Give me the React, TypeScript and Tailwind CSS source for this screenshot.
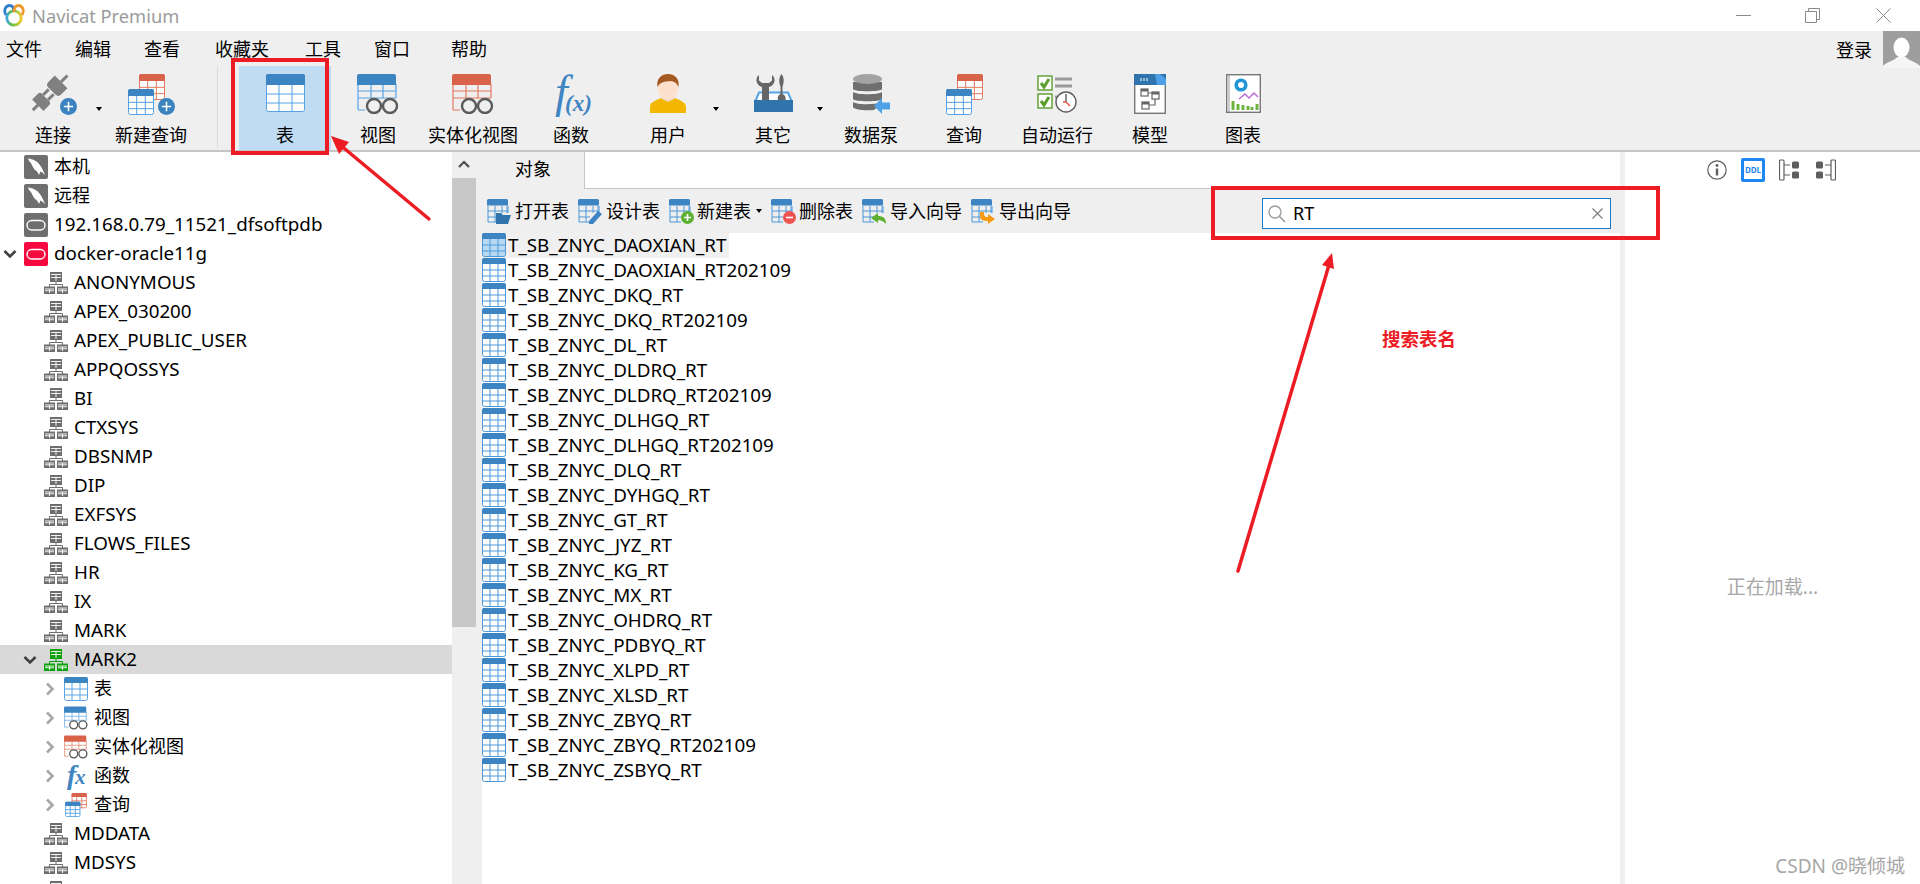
import React from "react";

const FONT = '"Noto Sans","Noto Sans CJK SC",sans-serif';

function Table({ w, h, head = "#3d84c2", line = "#55a2e4", fill = "#ffffff", headH, cols = 3, rows = 3, x = 0, y = 0, sw = 1, selected = false }: any) {
  const hh = headH ?? Math.round(h * 0.28);
  const r = 2;
  const v = Array.from({ length: cols - 1 }, (_, i) => x + ((i + 1) * w) / cols);
  const hs = Array.from({ length: rows - 1 }, (_, i) => y + hh + ((i + 1) * (h - hh)) / rows);
  return (
    <g>
      <rect x={x + sw / 2} y={y + sw / 2} width={w - sw} height={h - sw} rx={r} fill={selected ? "#b9d8f3" : fill} stroke={line} strokeWidth={sw} />
      {v.map((a, i) => <line key={i} x1={a} x2={a} y1={y + hh} y2={y + h} stroke={line} strokeWidth={sw} />)}
      {hs.map((a, i) => <line key={i} x1={x} x2={x + w} y1={a} y2={a} stroke={line} strokeWidth={sw} />)}
      <path d={`M${x} ${y + hh}V${y + r}a${r} ${r} 0 0 1 ${r} -${r}H${x + w - r}a${r} ${r} 0 0 1 ${r} ${r}V${y + hh}z`} fill={head} />
    </g>
  );
}

const Plus = ({ cx, cy, r, fill = "#3b82c0" }: any) => (
  <g>
    <circle cx={cx} cy={cy} r={r} fill={fill} />
    <path d={`M${cx - r * 0.55} ${cy}H${cx + r * 0.55}M${cx} ${cy - r * 0.55}V${cy + r * 0.55}`} stroke="#fff" strokeWidth={1.6} />
  </g>
);

const Plug = () => (
  <svg width="47" height="41" viewBox="0 0 47 41">
    <g transform="translate(20.500 18.500) rotate(-45)" fill="#808080">
      <rect x="-25" y="-1.500" width="9" height="3" />
      <path d="M-18 -8H-10a3 3 0 0 1 3 3V5a3 3 0 0 1 -3 3H-18z" />
      <rect x="-7" y="-5" width="8" height="3" />
      <rect x="-7" y="2" width="8" height="3" />
      <path d="M15 -9H6a4 4 0 0 0 -4 4V5a4 4 0 0 0 4 4H15z" />
      <rect x="15" y="-1.500" width="9" height="3" />
    </g>
    <Plus cx={38.5} cy={32.5} r={8.5} />
  </svg>
);

const NewQuery = () => (
  <svg width="47" height="41" viewBox="0 0 47 41">
    <Table x={11} y={0} w={26} h={26} head="#d9634a" line="#e27a5f" headH={7} />
    <Table x={0} y={15} w={26} h={26} headH={7} />
    <Plus cx={38.5} cy={32.5} r={8.5} />
  </svg>
);

const BigTable = () => (
  <svg width="39" height="38" viewBox="0 0 39 38"><Table w={39} h={38} headH={11} /></svg>
);

const Glasses = ({ bg, s = 1 }: any) => (
  <g stroke="#5b5b5b" strokeWidth={2.4 * s} fill={bg}>
    <circle cx={17 * s} cy={32 * s} r={7 * s} />
    <circle cx={33 * s} cy={32 * s} r={7 * s} />
  </g>
);

const ViewIcon = ({ head = "#3d84c2", line = "#55a2e4", bg = "#efefef", w = 42, h = 40 }: any) => (
  <svg width={w} height={h} viewBox="0 0 42 40">
    <path d="M1 36V10M1 36H8M14 10V24M26 10V24M39 10V24M1 17H39M1 24H39" stroke={line} strokeWidth="1.2" fill="none" />
    <path d="M0 11V2a2 2 0 0 1 2 -2H37a2 2 0 0 1 2 2V11z" fill={head} />
    <Glasses bg={bg} />
  </svg>
);

const FuncIcon = () => (
  <svg width="48" height="54" viewBox="0 0 48 54" className="-mt-[9px] -ml-[4px]">
    <text x="10" y="42" fontFamily='"Liberation Serif",serif' fontStyle="italic" fontSize="46" fill="#3f85c1">f</text>
    <text x="20" y="46" fontFamily='"Liberation Serif",serif' fontStyle="italic" fontWeight="bold" fontSize="23" fill="#3f85c1">(x)</text>
  </svg>
);

const UserIcon = () => (
  <svg width="36" height="39" viewBox="0 0 36 39">
    <path d="M0 39V33C0 28 6 26 12 24L18 27L24 24C30 26 36 28 36 33V39z" fill="#f4b700" />
    <path d="M12 20h12v5l-6 3l-6 -3z" fill="#f1d2bc" />
    <ellipse cx="18" cy="13" rx="10.500" ry="13" fill="#fde1ce" />
    <path d="M7.500 13C6 4 12 0 18 0C24 0 30 4 28.500 13C27 9 24 7 20 7C15 7.500 10 8 7.500 13z" fill="#a55a22" />
  </svg>
);

const ToolsIcon = () => (
  <svg width="39" height="38" viewBox="0 0 39 38">
    <path d="M1 28L5 18.500H34L38 28z" fill="#fff" stroke="#55a2e4" strokeWidth="2" />
    <path d="M5 1C1 4 1.500 11 8 13V28H15V13C21.500 11 22 4 18 1V6.500L15 9H8L5 6.500z" fill="#666" />
    <path d="M27.500 0C25 3 24.500 8 26.500 12.500V20C24 21 23 24 24 26H31.500C32.500 24 31 21 28.500 20V12.500C30.500 8 30 3 27.500 0z" fill="#666" />
    <rect x="0" y="26" width="39" height="12" fill="#2f74ad" />
  </svg>
);

const PumpIcon = () => (
  <svg width="37" height="41" viewBox="0 0 37 41">
    <path d="M0 8H29V15C29 18 0 18 0 15z" fill="#6f6f6f" />
    <path d="M0 18C4 21 25 21 29 18V25C29 28 0 28 0 25z" fill="#6f6f6f" />
    <path d="M0 28C4 31 22 31 29 28V29L21 36C10 37 0 35 0 33z" fill="#6f6f6f" />
    <ellipse cx="14.500" cy="5" rx="14.500" ry="5" fill="#a3a3a3" />
    <path d="M21 32L29 24V28.500H37V35.500H29V40z" fill="#4ea1e6" />
  </svg>
);

const QueryIcon = () => (
  <svg width="37" height="41" viewBox="0 0 37 41">
    <Table x={11} y={0} w={26} h={26} head="#d9634a" line="#e27a5f" headH={7} />
    <Table x={0} y={15} w={26} h={26} headH={7} />
  </svg>
);

const ScheduleIcon = () => (
  <svg width="40" height="39" viewBox="0 0 40 39">
    {[2, 20].map((y) => (
      <g key={y}>
        <rect x="1" y={y} width="14" height="14" fill="#fff" stroke="#5a9e2c" strokeWidth="1.4" />
        <path d={`M4 ${y + 7}L7 ${y + 11}L12 ${y + 3}`} stroke="#5a9e2c" strokeWidth="3" fill="none" />
      </g>
    ))}
    <path d="M18 5H35M18 12H35" stroke="#9a9a9a" strokeWidth="3" />
    <path d="M18 23H21" stroke="#9a9a9a" strokeWidth="3" />
    <circle cx="29" cy="28" r="10" fill="#fff" stroke="#5e5e5e" strokeWidth="1.4" />
    <path d="M29 20V28" stroke="#5e5e5e" strokeWidth="1.4" />
    <path d="M29 28L33 32M29 28L26 28" stroke="#e2533d" strokeWidth="1.4" />
  </svg>
);

const ModelIcon = () => (
  <svg width="32" height="40" viewBox="0 0 32 40">
    <rect x="0.7" y="0.7" width="30.600" height="38.600" fill="#fff" stroke="#777" strokeWidth="1.4" />
    <rect x="0" y="0" width="32" height="11" fill="#2f74ad" />
    <path d="M21 0H26L32 5V11H23z" fill="#4ea1e6" />
    <path d="M7 4V7M10 4V7M13 4V7" stroke="#fff" />
    <g fill="#fff" stroke="#666" strokeWidth="1.2">
      <rect x="7" y="15" width="7" height="7" />
      <rect x="18" y="18" width="7" height="7" />
      <rect x="8" y="28" width="7" height="7" />
    </g>
    <path d="M7 15h7v2.500h-7zM18 18h7v2.500h-7zM8 28h7v2.500h-7z" fill="#666" />
    <path d="M14 19H18M21 25V31H15" stroke="#666" strokeWidth="1.2" fill="none" />
  </svg>
);

const ChartIcon = () => (
  <svg width="35" height="39" viewBox="0 0 35 39">
    <rect x="0.7" y="0.7" width="33.600" height="37.600" fill="#fff" stroke="#777" strokeWidth="1.4" />
    <path d="M3 1V38" stroke="#999" />
    <circle cx="15" cy="11" r="4.800" fill="none" stroke="#2196d6" strokeWidth="3.600" />
    <path d="M13 25L19 20L23 24L28 19L32 23" fill="none" stroke="#b76cd6" strokeWidth="1.500" />
    <path d="M7 36V27M12 36V30M17 36V31M22 36V32M26 36V33M31 36V30" stroke="#6db33f" strokeWidth="3" />
  </svg>
);

const Dolphin = () => (
  <svg width="24" height="24" viewBox="0 0 24 24">
    <rect width="24" height="24" rx="2" fill="#6f6f6f" />
    <path d="M4 3.500C9 4 13.500 6.500 15.500 9.500C17.500 12 19 14.500 21 20C19.500 18.500 18.500 17.500 16.500 16.500L15 20C14 17.500 12.500 15.500 10.500 14.500C8.500 12 8 9 6.500 7.500C5.500 6.800 4.500 5.500 4 3.500z" fill="#fff" />
  </svg>
);

const Oracle = ({ bg }: any) => (
  <svg width="24" height="24" viewBox="0 0 24 24">
    <rect width="24" height="24" rx="2" fill={bg} />
    <rect x="3" y="7.500" width="18" height="9.500" rx="4.700" fill="none" stroke="#fff" strokeWidth="1.400" />
  </svg>
);

const Schema = ({ c = "#6e6e6e" }: any) => (
  <svg width="24" height="22" viewBox="0 0 24 22">
    <path d="M12 9V13M5.500 15V12.500H18.500V15" fill="none" stroke={c} />
    {[[6, 0, 12, 10], [0, 14.500, 11, 7.500], [13, 14.500, 11, 7.500]].map(([x, y, w, h], i) => (
      <g key={i}>
        <rect x={x} y={y} width={w} height={h} fill={c} />
        <path d={`M${x + 1} ${y + h / 2 + 0.5}H${x + w - 1}M${x + w / 2} ${y + 2.500}V${y + h - 1}M${x + 1} ${y + 2.500}H${x + w - 1}`} stroke="#fff" strokeWidth="0.900" />
      </g>
    ))}
  </svg>
);

const ListTable = ({ selected = false, line = "#4d97d8" }: any) => (
  <svg width="24" height="24" viewBox="0 0 24 24" className="shrink-0"><Table w={24} h={24} headH={6} line={line} selected={selected} /></svg>
);

const SmallTable = ({ children }: any) => (
  <svg width="25" height="25" viewBox="0 0 25 25" className="shrink-0">
    <path d="M1 23V7M1 23H12M8 7V23M15 7V14M21 7V14M1 12H21M1 18H12M20 7V14" stroke="#4d97d8" strokeWidth="1" fill="none" />
    <path d="M0 6.500V1.500A1.500 1.500 0 0 1 1.500 0H19.500A1.500 1.500 0 0 1 21 1.500V6.500z" fill="#3d84c2" />
    {children}
  </svg>
);

const Chevron = ({ dir = "down", c = "#404040" }: any) => (
  <svg width="14" height="14" viewBox="0 0 14 14">
    {dir === "down" && <path d="M1.500 4L7 9.500L12.500 4" fill="none" stroke={c} strokeWidth="2.600" />}
    {dir === "right" && <path d="M4 1.500L9.500 7L4 12.500" fill="none" stroke={c} strokeWidth="2.600" />}
    {dir === "up" && <path d="M2 9L7 4L12 9" fill="none" stroke={c} strokeWidth="2.200" />}
  </svg>
);

const Caret = () => <div className="w-0 h-0 border-x-[3px] border-x-transparent border-t-[4px] border-t-black" />;

function Tool({ w, icon, label, caret, selected }: any) {
  return (
    <div className={`relative flex flex-col items-center pt-2 ${w} ${selected ? "bg-[#c0dcf3] h-[84px]" : ""}`}>
      <div className="h-[42px] flex items-start justify-center">{icon}</div>
      <div className="mt-[7px] h-6 leading-6 whitespace-nowrap">{label}</div>
      {caret && <div className={`absolute top-[41px] ${caret}`}><Caret /></div>}
    </div>
  );
}

const MENUS: [string, string][] = [
  ["文件", "w-[69px]"], ["编辑", "w-[69px]"], ["查看", "w-[71px]"], ["收藏夹", "w-[90px]"], ["工具", "w-[69px]"], ["窗口", "w-[77px]"], ["帮助", "w-[40px]"],
];

const SCHEMAS_A = ["ANONYMOUS", "APEX_030200", "APEX_PUBLIC_USER", "APPQOSSYS", "BI", "CTXSYS", "DBSNMP", "DIP", "EXFSYS", "FLOWS_FILES", "HR", "IX", "MARK"];

const TABLES = ["DAOXIAN_RT", "DAOXIAN_RT202109", "DKQ_RT", "DKQ_RT202109", "DL_RT", "DLDRQ_RT", "DLDRQ_RT202109", "DLHGQ_RT", "DLHGQ_RT202109", "DLQ_RT", "DYHGQ_RT", "GT_RT", "JYZ_RT", "KG_RT", "MX_RT", "OHDRQ_RT", "PDBYQ_RT", "XLPD_RT", "XLSD_RT", "ZBYQ_RT", "ZBYQ_RT202109", "ZSBYQ_RT"];

function Conn({ icon, label, open, latin }: any) {
  return (
    <div className="h-[29px] flex items-center">
      <div className="w-6 pl-[3px] flex items-center">{open && <Chevron />}</div>
      {icon}
      <span className={`ml-[6px] whitespace-nowrap ${latin ? "text-[18.800px]" : ""}`}>{label}</span>
    </div>
  );
}

function SchemaRow({ label, active, c, open }: any) {
  return (
    <div className={`h-[29px] flex items-center ${active ? "bg-[#d9d9d9]" : ""}`}>
      <div className="w-[44px] pl-[23px] flex items-center">{open && <Chevron />}</div>
      <Schema c={c} />
      <span className="ml-[6px] whitespace-nowrap text-[18.800px]">{label}</span>
    </div>
  );
}

function Child({ icon, label }: any) {
  return (
    <div className="h-[29px] flex items-center">
      <div className="w-[64px] pl-[43px] flex items-center"><Chevron dir="right" c="#a8a8a8" /></div>
      <div className="w-6 h-6 flex items-center justify-center">{icon}</div>
      <span className="ml-[6px] whitespace-nowrap">{label}</span>
    </div>
  );
}

function ObjBtn({ glyph, label, caret }: any) {
  return (
    <div className="flex items-center">
      <SmallTable>{glyph}</SmallTable>
      <span className="ml-[3px] whitespace-nowrap">{label}</span>
      {caret && <div className="w-[11px] flex justify-end"><Caret /></div>}
    </div>
  );
}

export default function App() {
  return (
    <div className="relative w-[1920px] h-[884px] overflow-hidden bg-white text-[18px] text-black" style={{ fontFamily: FONT }}>
      {/* title bar */}
      <div className="h-[31px] flex items-center pl-[3px] bg-white">
        <svg width="22" height="23" viewBox="0 0 22 23">
          <defs>
            <linearGradient id="ring" x1="0" y1="0" x2="1" y2="0">
              <stop offset="0" stopColor="#3fa9e0" />
              <stop offset="0.3" stopColor="#5dbb46" />
              <stop offset="0.7" stopColor="#a5cf3a" />
              <stop offset="1" stopColor="#f2c230" />
            </linearGradient>
          </defs>
          <circle cx="11" cy="14" r="7.200" fill="none" stroke="url(#ring)" strokeWidth="2.800" />
          <path d="M3 11C0 6 3 1.500 6.500 1.500C10 1.500 11 5 11 8" fill="none" stroke="#2f7fd0" strokeWidth="2.800" />
          <path d="M19 11C22 6 19 1.500 15.500 1.500C12 1.500 11 5 11 8" fill="none" stroke="#ef9a2c" strokeWidth="2.800" />
        </svg>
        <span className="ml-[7px] text-[18.300px] text-[#9b9b9b] whitespace-nowrap">Navicat Premium</span>
        <div className="ml-auto flex items-center">
          <div className="w-[15px] h-px bg-[#8a8a8a]" />
          <svg className="ml-[54px]" width="15" height="15" viewBox="0 0 15 15"><path d="M3.500 3V0.500H14.500V11.500H11.500M0.500 3.500H11.500V14.500H0.500z" fill="none" stroke="#8a8a8a" /></svg>
          <svg className="ml-[56px] mr-[29px]" width="15" height="15" viewBox="0 0 15 15"><path d="M0.500 0.500L14.500 14.500M14.500 0.500L0.500 14.500" stroke="#8a8a8a" /></svg>
        </div>
      </div>

      {/* menu + ribbon */}
      <div className="h-[121px] bg-[#efefef] border-b-[2px] border-[#c6c6c6]">
        <div className="h-[35px] flex items-start pl-[6px]">
          <div className="flex items-center h-[36px]">
            {MENUS.map(([m, w]) => <div key={m} className={`${w} whitespace-nowrap`}>{m}</div>)}
          </div>
          <div className="ml-auto flex items-start">
            <span className="mt-[6px] mr-[11px]">登录</span>
            <svg width="37" height="37" viewBox="0 0 37 37" className="block">
              <rect width="37" height="37" fill="#9e9e9e" />
              <ellipse cx="18.500" cy="16.500" rx="8" ry="10" fill="#fff" />
              <path d="M0 37V35C3 31 11 30 14.500 26H22.500C26 30 34 31 37 35V37z" fill="#f5f5f5" />
            </svg>
          </div>
        </div>
        <div className="flex h-[85px]">
          <Tool w="w-[106px]" icon={<div className="ml-[1px]"><Plug /></div>} label="连接" caret="right-[4px]" />
          <Tool w="w-[90px]" icon={<NewQuery />} label="新建查询" />
          <div className="w-[43px] flex justify-center pr-[1px] pt-[1px]"><div className="w-px h-[81px] bg-[#d9d9d9]" /></div>
          <Tool w="w-[92px]" icon={<BigTable />} label="表" selected />
          <Tool w="w-[94px]" icon={<ViewIcon />} label="视图" />
          <Tool w="w-[96px]" icon={<ViewIcon head="#d9634a" line="#e27a5f" />} label="实体化视图" />
          <Tool w="w-[100px]" icon={<FuncIcon />} label="函数" />
          <Tool w="w-[94px]" icon={<UserIcon />} label="用户" caret="-right-[4px]" />
          <Tool w="w-[116px]" icon={<ToolsIcon />} label="其它" caret="right-[8px]" />
          <Tool w="w-[80px]" icon={<PumpIcon />} label="数据泵" />
          <Tool w="w-[106px]" icon={<QueryIcon />} label="查询" />
          <Tool w="w-[80px]" icon={<ScheduleIcon />} label="自动运行" />
          <Tool w="w-[106px]" icon={<ModelIcon />} label="模型" />
          <Tool w="w-[80px]" icon={<ChartIcon />} label="图表" />
        </div>
      </div>

      {/* body */}
      <div className="flex h-[732px]">
        {/* tree */}
        <div className="w-[452px] overflow-hidden">
          <Conn icon={<Dolphin />} label="本机" />
          <Conn icon={<Dolphin />} label="远程" />
          <Conn icon={<Oracle bg="#6f6f6f" />} label="192.168.0.79_11521_dfsoftpdb" latin />
          <Conn icon={<Oracle bg="#f5093f" />} label="docker-oracle11g" open latin />
          {SCHEMAS_A.map((s) => <SchemaRow key={s} label={s} />)}
          <SchemaRow label="MARK2" active open c="#0da10d" />
          <Child label="表" icon={<ListTable line="#5aa5e6" />} />
          <Child label="视图" icon={<ViewIcon w={24} h={24} bg="#ffffff" />} />
          <Child label="实体化视图" icon={<ViewIcon w={24} h={24} head="#d9634a" line="#e27a5f" bg="#ffffff" />} />
          <Child label="函数" icon={
            <svg width="30" height="36" viewBox="0 0 30 36" className="shrink-0">
              <text x="6" y="26" fontFamily='"Liberation Serif",serif' fontStyle="italic" fontWeight="bold" fontSize="28" fill="#3f85c1">f</text>
              <text x="14" y="26" fontFamily='"Liberation Serif",serif' fontStyle="italic" fontWeight="bold" fontSize="21" fill="#3f85c1">x</text>
            </svg>
          } />
          <Child label="查询" icon={<svg width="24" height="24" viewBox="0 0 37 41"><Table x={11} y={0} w={26} h={26} head="#d9634a" line="#e27a5f" headH={7} sw={1.5} /><Table x={0} y={15} w={26} h={26} headH={7} sw={1.5} /></svg>} />
          <SchemaRow label="MDDATA" />
          <SchemaRow label="MDSYS" />
          <SchemaRow label="" />
        </div>

        {/* scrollbar */}
        <div className="w-[30px] bg-[#efefef] shrink-0">
          <div className="w-[24px] h-[26px] flex items-center justify-center"><Chevron dir="up" c="#4d4d4d" /></div>
          <div className="w-[24px] h-[449px] bg-[#c8c8c8]" />
        </div>

        {/* objects */}
        <div className="w-[1138px] shrink-0 flex flex-col">
          <div className="h-[37px] flex">
            <div className="w-[103px] bg-[#efefef] border-r border-[#c6c6c6] flex items-center justify-center pb-[2px]">对象</div>
            <div className="flex-1 border-b border-[#c6c6c6]" />
          </div>
          <div className="h-[44px] bg-[#efefef] flex items-center pl-[5px] gap-[9px]">
            <ObjBtn label="打开表" glyph={<path d="M9 14H14L16 16H24L21 25H9z" fill="#2f74ad" />} />
            <ObjBtn label="设计表" glyph={<path d="M11 22L20 12L24 15L15 25H11z" fill="#3d84c2" />} />
            <ObjBtn label="新建表" caret glyph={<Plus cx={18.500} cy={18.500} r={6.500} fill="#5bb12f" />} />
            <ObjBtn label="删除表" glyph={<g><circle cx="18.500" cy="18.500" r="6.500" fill="#ef5350" /><path d="M15 18.500H22" stroke="#fff" strokeWidth="1.600" /></g>} />
            <ObjBtn label="导入向导" glyph={<path d="M24 25C24 19 21 17 16 17V14L9 19L16 24V21C19 21 21 22 24 25z" fill="#5bb12f" />} />
            <ObjBtn label="导出向导" glyph={<path d="M9 13V17C9 21 12 22 17 22V25L24 20L17 15V18C13 18 13 16 13 13z" fill="#f59a12" />} />
            <div className="ml-auto mr-[9px] mt-[5px] w-[349px] h-[31px] bg-white border border-[#1979ca] flex items-center pl-[4px] pr-[7px]">
              <svg width="20" height="20" viewBox="0 0 20 20" className="shrink-0"><circle cx="8" cy="8" r="6" fill="none" stroke="#9a9a9a" strokeWidth="1.300" /><path d="M12.500 12.500L18 18" stroke="#9a9a9a" strokeWidth="1.600" /></svg>
              <span className="ml-[6px]">RT</span>
              <svg className="ml-auto" width="11" height="11" viewBox="0 0 11 11"><path d="M0.500 0.500L10.500 10.500M10.500 0.500L0.500 10.500" stroke="#7d7d7d" strokeWidth="1.200" /></svg>
            </div>
          </div>
          <div className="flex-1 overflow-hidden">
            {TABLES.map((t, i) => (
              <div key={t} className={`h-[25px] flex items-start w-fit pr-[2px] ${i === 0 ? "bg-[#f0f0f0]" : ""}`}>
                <ListTable selected={i === 0} />
                <span className="ml-[2px] leading-[24px] text-[18.800px] whitespace-nowrap">T_SB_ZNYC_{t}</span>
              </div>
            ))}
          </div>
        </div>

        {/* right panel */}
        <div className="flex-1 border-l-[5px] border-[#efefef] flex flex-col">
          <div className="mt-[6px] h-6 pl-[82px] flex items-center">
            <svg width="20" height="20" viewBox="0 0 20 20">
              <circle cx="10" cy="10" r="9.200" fill="none" stroke="#5e5e5e" strokeWidth="1.200" />
              <circle cx="10" cy="5.500" r="1.400" fill="#5e5e5e" />
              <rect x="8.800" y="8.500" width="2.400" height="7" fill="#5e5e5e" />
            </svg>
            <div className="ml-[14px] w-6 h-6 border-[3px] border-[#1e88f0] rounded-[2px] flex items-center justify-center text-[8px] leading-none font-bold text-[#1e88f0]">DDL</div>
            <svg className="ml-[14px]" width="20" height="22" viewBox="0 0 20 22">
              <rect x="0.500" y="1" width="4.500" height="20" rx="1" fill="none" stroke="#5e5e5e" strokeWidth="1.200" />
              <path d="M5 6H11M5 16H11" stroke="#5e5e5e" strokeWidth="1.200" />
              <rect x="13" y="2.500" width="7" height="7" rx="1.500" fill="#5e5e5e" />
              <rect x="13" y="12.500" width="7" height="7" rx="1.500" fill="#5e5e5e" />
            </svg>
            <svg className="ml-[17px]" width="20" height="22" viewBox="0 0 20 22">
              <rect x="15" y="1" width="4.500" height="20" rx="1" fill="none" stroke="#5e5e5e" strokeWidth="1.200" />
              <path d="M9 6H15M9 16H15" stroke="#5e5e5e" strokeWidth="1.200" />
              <rect x="0" y="2.500" width="7" height="7" rx="1.500" fill="#5e5e5e" />
              <rect x="0" y="12.500" width="7" height="7" rx="1.500" fill="#5e5e5e" />
            </svg>
          </div>
          <div className="mt-[391px] h-7 leading-7 text-center text-[19px] text-[#a8a8a8]">正在加载...</div>
        </div>
      </div>

      {/* annotations */}
      <div className="absolute left-[231px] top-[58px] w-[98px] h-[97px] border-[4px] border-[#ed1c24]" />
      <div className="absolute left-[1211px] top-[186px] w-[449px] h-[54px] border-[4px] border-[#ed1c24]" />
      <svg className="absolute left-0 top-0 pointer-events-none" width="1920" height="884" viewBox="0 0 1920 884">
        <path d="M429 219L339 144" stroke="#ed1c24" strokeWidth="3.500" strokeLinecap="round" />
        <path d="M331 136L349 142L339 154z" fill="#ed1c24" />
        <path d="M1238 571L1329 265" stroke="#ed1c24" strokeWidth="3.500" strokeLinecap="round" />
        <path d="M1332 253L1334 269L1322 265z" fill="#ed1c24" />
      </svg>
      <div className="absolute left-[1382px] top-[325px] text-[18.500px] text-[#ed1c24] font-bold leading-7 whitespace-nowrap">搜索表名</div>
      <div className="absolute right-[15px] top-[852px] text-[19px] text-[#a6a6a6] leading-7 whitespace-nowrap">CSDN @晓倾城</div>
    </div>
  );
}
